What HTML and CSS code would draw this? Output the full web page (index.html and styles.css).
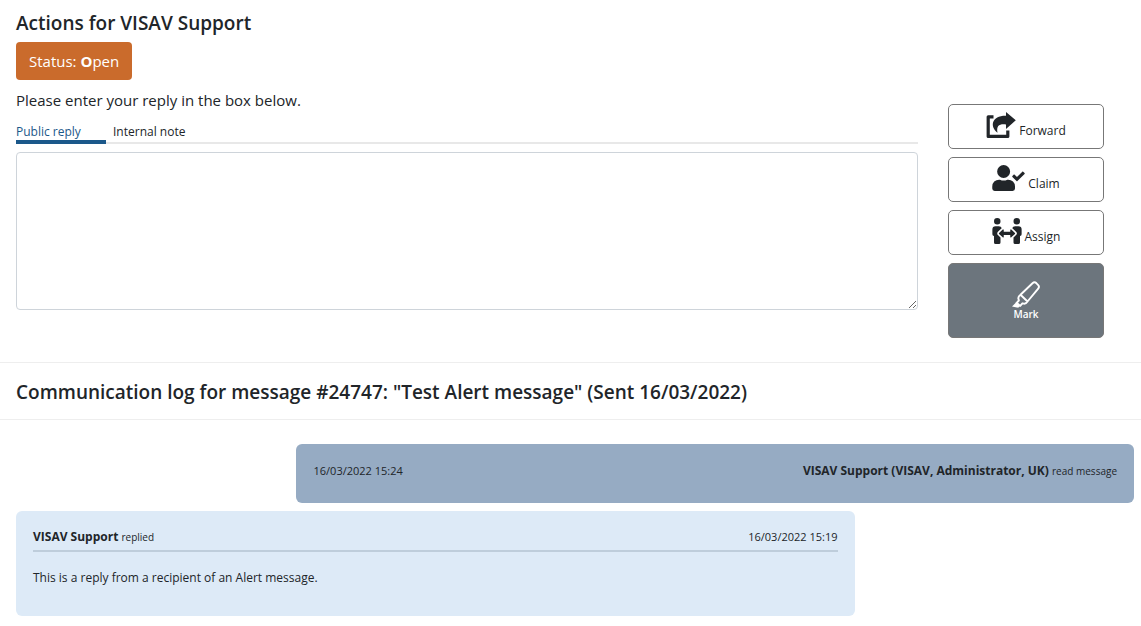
FILE: index.html
```html
<!DOCTYPE html>
<html lang="en">
<head>
<meta charset="UTF-8">
<title>Actions for VISAV Support</title>
<link rel="stylesheet" href="styles.css">
</head>

<body>

<section class="actions">
  <div class="reply">
    <h1>Actions for VISAV Support</h1>
    <button type="button" class="status">Status: <b>O</b>pen</button>
    <p class="intro"><label for="reply">Please enter your reply in the box below.</label></p>
    <nav class="tabs">
      <a href="#public" class="tab active">Public reply</a>
      <a href="#internal" class="tab">Internal note</a>
    </nav>
    <textarea id="reply"></textarea>
  </div>

  <div class="buttons">
    <button type="button" class="btn">
      <svg width="30" height="26" viewBox="0 0 30 26">
        <path d="M7.500 4.800H2.200V24.400H21.800V18.500" fill="none" stroke="currentColor" stroke-width="3.200" stroke-linejoin="round"/>
        <path d="M20 0L29.800 8.300L20 17V12.500C13.500 11.800 10.200 13.500 11.500 20.800C3.500 14.500 5.500 3.600 20 3.800Z" fill="currentColor"/>
      </svg>
      <span>Forward</span>
    </button>
    <button type="button" class="btn">
      <svg width="33" height="26" viewBox="0 0 640 512">
        <path fill="currentColor" d="M224 256A128 128 0 1 0 224 0a128 128 0 0 0 0 256zm89.600 32h-16.700a174 174 0 0 1-145.800 0h-16.700A134.400 134.400 0 0 0 0 422.400V464a48 48 0 0 0 48 48h352a48 48 0 0 0 48-48v-41.600A134.400 134.400 0 0 0 313.600 288zm323-128.400l-27.800-28.100c-4.600-4.700-12.100-4.700-16.800-.1l-104.800 104-45.500-45.800c-4.600-4.700-12.100-4.700-16.800-.1l-28.100 27.900c-4.700 4.600-4.700 12.100-.1 16.800l81.700 82.300c4.600 4.700 12.100 4.700 16.800.1l141.300-140.200c4.600-4.700 4.700-12.200.1-16.800z"/>
      </svg>
      <span>Claim</span>
    </button>
    <button type="button" class="btn">
      <svg width="30" height="26" viewBox="0 0 576 512">
        <path fill="currentColor" d="M96,128A64,64,0,1,0,32,64,64,64,0,0,0,96,128Zm0,176.080a44.110,44.110,0,0,1,13.640-32L181.770,204c1.650-1.550,3.770-2.310,5.610-3.570A63.910,63.910,0,0,0,128,160H64A64,64,0,0,0,0,224v96a32,32,0,0,0,32,32V480a32,32,0,0,0,32,32h64a32,32,0,0,0,32-32V383.610l-50.360-47.530A44.080,44.080,0,0,1,96,304.080ZM480,128a64,64,0,1,0-64-64A64,64,0,0,0,480,128Zm32,32H448a63.910,63.910,0,0,0-59.380,40.420c1.840,1.270,4,2,5.620,3.590l72.120,68.060a44.370,44.370,0,0,1,0,64L416,383.620V480a32,32,0,0,0,32,32h64a32,32,0,0,0,32-32V352a32,32,0,0,0,32-32V224A64,64,0,0,0,512,160ZM444.400,295.340l-72.120-68.060A12,12,0,0,0,352,236v36H224V236a12,12,0,0,0-20.280-8.730L131.600,295.340a12.400,12.400,0,0,0,0,17.470l72.120,68.070A12,12,0,0,0,224,372.140V336H352v36.140a12,12,0,0,0,20.280,8.740l72.120-68.070A12.400,12.400,0,0,0,444.400,295.340Z"/>
      </svg>
      <span>Assign</span>
    </button>
    <button type="button" class="btn mark">
      <svg width="28" height="27" viewBox="0 0 28 27">
        <path d="M8.500 13.800L20.500 2.200Q22.500 0.400 24.500 2.300L26 3.800Q27.800 5.600 26.200 7.600L15.500 20.500Z M8.500 13.800Q5.700 15.800 6.500 18L6.900 19.500L4.600 21.800L8.200 24.900L10.400 22.300L12 22.700Q14 22.900 15.500 20.500" fill="none" stroke="currentColor" stroke-width="1.900" stroke-linejoin="round"/>
        <path d="M4 21.500L0 25.600L6.200 26.700L8.300 24.700Z" fill="currentColor"/>
      </svg>
      <span>Mark</span>
    </button>
  </div>
</section>

<h2 class="log-title">Communication log for message #24747: "Test Alert message" (Sent 16/03/2022)</h2>

<section class="log">
  <article class="message sent">
    <div class="message-head">
      <time>16/03/2022 15:24</time>
      <div><b>VISAV Support (VISAV, Administrator, UK)</b> <small>read message</small></div>
    </div>
  </article>
  <article class="message received">
    <div class="message-head">
      <div><b>VISAV Support</b> <small>replied</small></div>
      <time>16/03/2022 15:19</time>
    </div>
    <p>This is a reply from a recipient of an Alert message.</p>
  </article>
</section>

</body>
</html>
```
FILE: styles.css
```css
* {
  box-sizing: border-box;
}
body {
  margin: 0;
  font-family: "Segoe UI", "Open Sans", "Noto Sans", sans-serif;
  font-size: 12px;
  line-height: 18px;
  color: #212529;
  background: #fff;
}
h1, h2 {
  margin: 0;
  font-size: 19px;
  font-weight: 600;
  line-height: 24px;
}
button {
  font-family: inherit;
  cursor: pointer;
}

.actions {
  display: flex;
  gap: 30px;
  padding: 11px 37px 24px 16px;
}
.reply {
  flex: 1;
}
.status {
  display: block;
  height: 38px;
  margin-top: 7px;
  padding: 0 13px;
  border: none;
  border-radius: 4px;
  background: #ca6b2c;
  color: #fff;
  font-size: 15px;
}
.intro {
  margin: 8px 0;
  font-size: 15px;
  line-height: 24px;
}
.tabs {
  display: flex;
  gap: 7px;
  height: 24px;
  border-bottom: 2px solid #e8e8e8;
}
.tab {
  height: 24px;
  line-height: 24px;
  color: #212529;
  text-decoration: none;
}
.tab.active {
  width: 90px;
  color: #1b588a;
  border-bottom: 4px solid #1b588a;
}
textarea {
  display: block;
  width: 100%;
  height: 158px;
  margin-top: 8px;
  padding: 6px 12px;
  border: 1px solid #ced4da;
  border-radius: 4px;
  font-family: inherit;
  font-size: 15px;
}

.buttons {
  display: flex;
  flex-direction: column;
  gap: 8px;
  width: 156px;
  padding-top: 93px;
}
.btn {
  display: flex;
  justify-content: center;
  align-items: flex-start;
  gap: 3px;
  height: 45px;
  padding: 7px 0;
  border: 1px solid #777;
  border-radius: 5px;
  background: #fff;
  color: #212529;
  font-size: 12px;
  line-height: 18px;
}
.btn span {
  margin-top: 10px;
}
.mark {
  flex-direction: column;
  justify-content: center;
  align-items: center;
  gap: 0;
  height: 75px;
  background: #6c757d;
  color: #fff;
  font-size: 10px;
  font-weight: 600;
  line-height: 12px;
}
.mark span {
  margin-top: 0;
}

.log-title {
  padding: 17px 16px 15px;
  border-top: 1px solid #eee;
  border-bottom: 1px solid #eee;
}
.log {
  display: flex;
  flex-direction: column;
  gap: 8px;
  padding: 24px 7px 10px 16px;
}
.message {
  width: 75%;
  padding: 17px;
  border-radius: 6px;
}
.message-head {
  display: flex;
  justify-content: space-between;
}
.message time {
  font-size: 11px;
}
.message small {
  font-size: 10px;
  line-height: 12px;
}
.message p {
  margin: 17px 0 12px;
}
.sent {
  align-self: flex-end;
  padding: 18px 17px 23px 18px;
  background: #96abc3;
}
.received {
  background: #ddeaf7;
}
.received .message-head {
  padding-bottom: 4px;
  border-bottom: 2px solid #becddb;
}
```
